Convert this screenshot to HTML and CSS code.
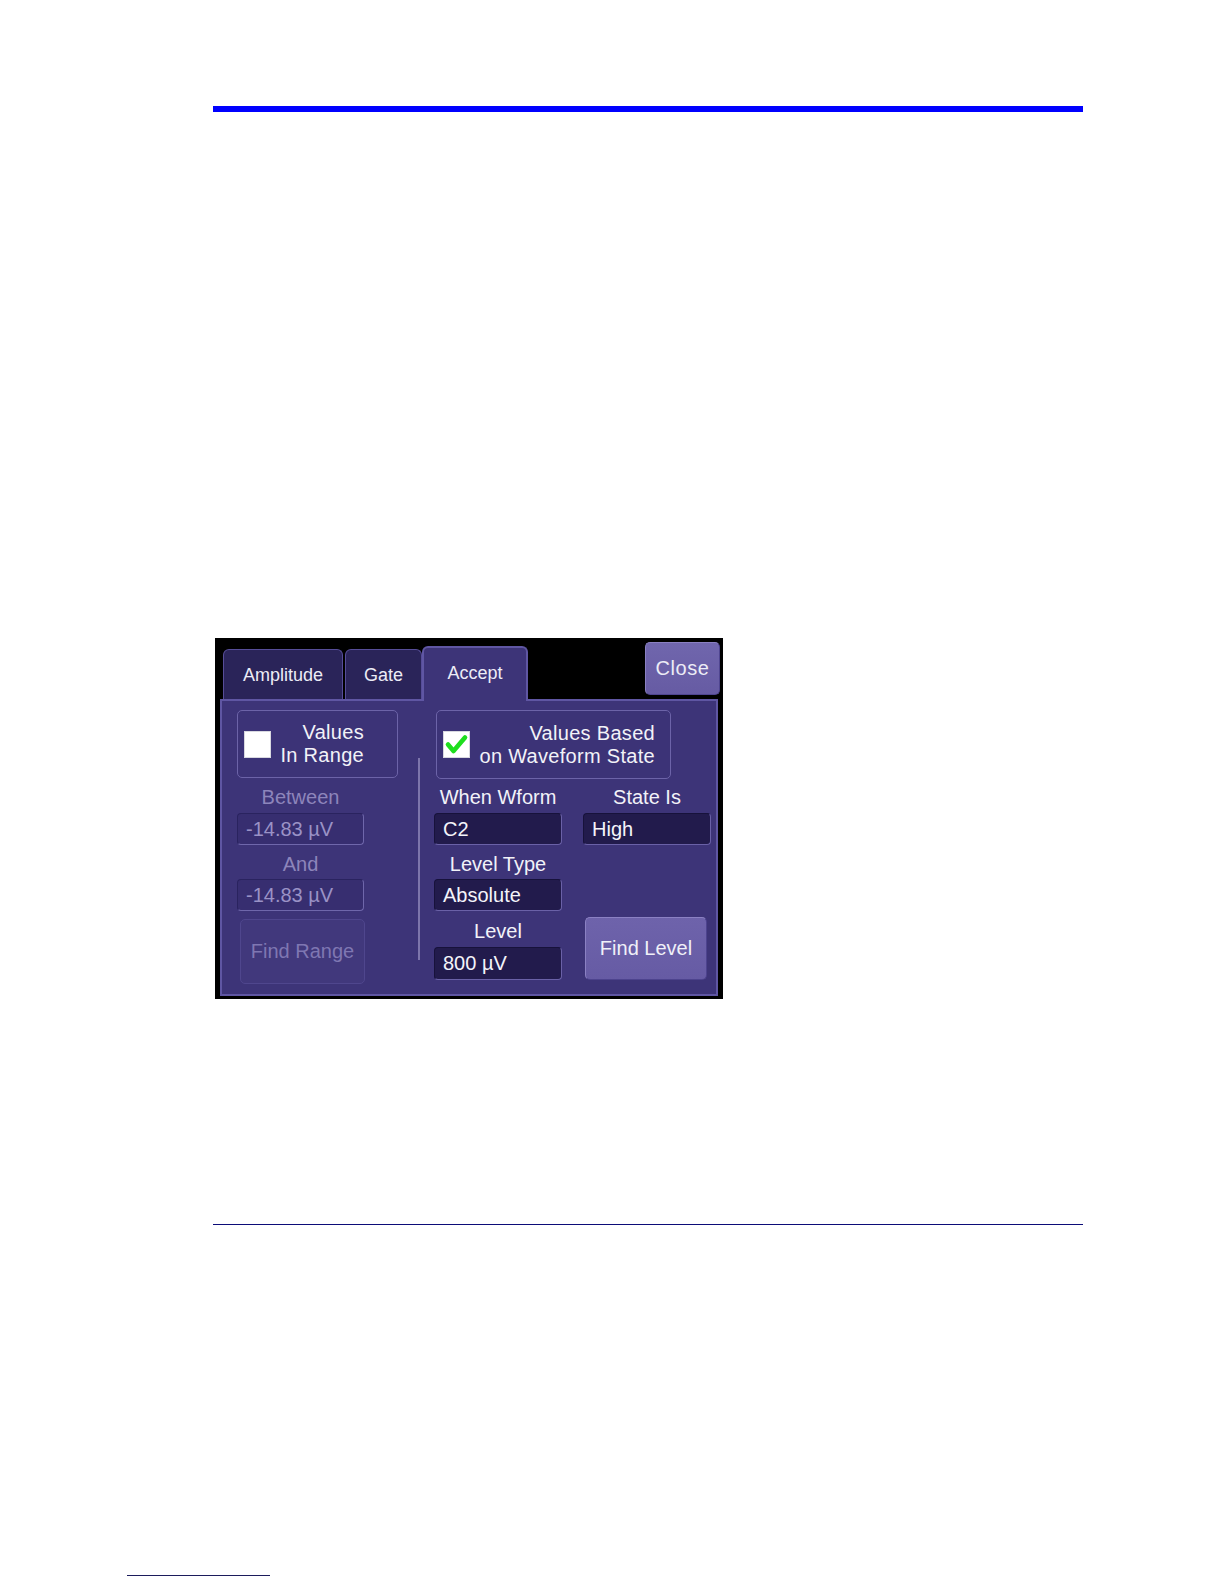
FILE: index.html
```html
<!DOCTYPE html>
<html lang="en">
<head>
<meta charset="utf-8">
<title>Accept</title>
<link rel="stylesheet" href="styles.css">
</head>
<body>
<div class="page">
  <div class="rule-top"></div>

  <div class="dialog">
    <div class="dialog-head">
      <div class="tab">Amplitude</div>
      <div class="tab tab-gate">Gate</div>
      <div class="tab tab-active">Accept</div>
      <div class="close-btn">Close</div>
    </div>

    <div class="panel">
      <div class="col-left">
        <div class="opt-btn opt-range">
          <span class="checkbox"></span>
          <span class="opt-text">Values<br>In Range</span>
        </div>
        <div class="label label-first disabled">Between</div>
        <div class="field field-disabled">-14.83 µV</div>
        <div class="label label-mid disabled">And</div>
        <div class="field field-disabled field-second">-14.83 µV</div>
        <div class="btn-find-range">Find Range</div>
      </div>

      <div class="divider"></div>

      <div class="col-right">
        <div class="opt-btn opt-state">
          <span class="checkbox">
            <svg viewBox="0 0 27 27" width="27" height="27">
              <path d="M5 13.5 L10.5 20 L22 6.5" fill="none" stroke="#1ede1e" stroke-width="4.6" stroke-linecap="round" stroke-linejoin="round"/>
            </svg>
          </span>
          <span class="opt-text">Values Based<br>on Waveform State</span>
        </div>
        <div class="grid">
          <div class="label label-first">When Wform</div>
          <div class="label label-first">State Is</div>
          <div class="field field-row1">C2</div>
          <div class="field field-row1">High</div>
          <div class="label label-mid">Level Type</div>
          <div class="field field-row2">Absolute</div>
          <div class="label label-last">Level</div>
          <div class="field field-row3">800 µV</div>
          <div class="btn-find-level">Find Level</div>
        </div>
      </div>
    </div>
  </div>

  <div class="rule-bottom"></div>
  <div class="rule-foot"></div>
</div>
</body>
</html>
```

FILE: styles.css
```css
html, body {
  margin: 0;
  padding: 0;
  background: #ffffff;
}

body {
  font-family: "Liberation Sans", Arial, sans-serif;
}

.page {
  box-sizing: border-box;
  height: 1584px;
  padding: 106px 0 0 213px;
  overflow: hidden;
}

.rule-top {
  width: 870px;
  height: 6px;
  background: #0000ff;
}

.rule-bottom {
  width: 870px;
  height: 1px;
  margin-top: 225px;
  background: #0c0c78;
}

.rule-foot {
  width: 143px;
  height: 1px;
  margin: 350px 0 0 -86px;
  background: #1c1c5c;
}

/* ---------- dialog ---------- */

.dialog {
  box-sizing: border-box;
  width: 508px;
  height: 361px;
  margin: 526px 0 0 2px;
  padding: 0 5px 3px 5px;
  background: #000000;
  display: flex;
  flex-direction: column;
  color: #f2f2f8;
  font-size: 20px;
}

.dialog-head {
  height: 61px;
  display: flex;
  align-items: flex-end;
  padding-left: 3px;
}

.tab {
  box-sizing: border-box;
  height: 50px;
  width: 120px;
  background: #2a2459;
  border: 1px solid #564d98;
  border-bottom: none;
  border-radius: 6px 6px 0 0;
  display: flex;
  align-items: center;
  justify-content: center;
  font-size: 18px;
  color: #ececf6;
  padding-top: 1px;
}

.tab-gate {
  width: 77px;
  margin-left: 2px;
}

.tab-active {
  width: 106px;
  height: 55px;
  margin-bottom: -2px;
  padding-bottom: 4px;
  background: #3d3478;
  border: 2px solid #5f56a3;
  border-bottom: none;
  position: relative;
  z-index: 1;
}

.close-btn {
  box-sizing: border-box;
  align-self: flex-start;
  margin: 4px -2px 0 auto;
  width: 75px;
  height: 53px;
  border-radius: 5px;
  background: linear-gradient(#7066ad, #665ba3);
  border: 1px solid #8a80c2;
  border-right-color: #4f4590;
  border-bottom-color: #4f4590;
  display: flex;
  align-items: center;
  justify-content: center;
  font-size: 20px;
  letter-spacing: 0.6px;
  color: #ececf6;
}

.panel {
  box-sizing: border-box;
  height: 297px;
  border: 2px solid #5f56a3;
  background: #3d3478;
  padding: 9px 0 0 15px;
  display: flex;
  align-items: flex-start;
}

/* option buttons with checkbox */

.opt-btn {
  box-sizing: border-box;
  display: flex;
  align-items: center;
  border: 1px solid #6c63a8;
  border-radius: 5px;
  background: #3c3377;
  padding-left: 6px;
}

.opt-range {
  width: 161px;
  height: 68px;
}

.opt-state {
  width: 235px;
  height: 69px;
  margin-left: 2px;
}

.checkbox {
  box-sizing: border-box;
  width: 27px;
  height: 27px;
  background: #ffffff;
  border: 1px solid #d8d8e0;
  flex: none;
  display: flex;
}

.checkbox svg {
  display: block;
  margin: -1px;
}

.opt-text {
  flex: 1;
  text-align: right;
  line-height: 23px;
  font-size: 20px;
  letter-spacing: 0.3px;
  color: #f2f2f8;
}

.opt-range .opt-text {
  padding-right: 33px;
}

.opt-state .opt-text {
  padding-right: 15px;
}

/* labels and fields */

.label {
  height: 22px;
  line-height: 22px;
  text-align: center;
  font-size: 20px;
  white-space: nowrap;
}

.col-left .label {
  width: 127px;
}

.label.disabled {
  color: #8d85bb;
}

.label-first {
  margin-top: 7px;
}

.col-left .label-first {
  margin-top: 8px;
}

.label-mid {
  margin-top: 8px;
}

.label-last {
  margin-top: 9px;
}

.field {
  box-sizing: border-box;
  height: 32px;
  line-height: 30px;
  padding-left: 8px;
  border-radius: 4px;
  background: #221b4c;
  border: 1px solid #6a61a7;
  border-top-color: #17123b;
  border-left-color: #17123b;
  font-size: 20px;
  color: #f4f4fa;
  white-space: nowrap;
  margin-top: 5px;
}

.field-disabled {
  width: 127px;
  background: #372e70;
  border-color: #2a235f #6f67ab #6f67ab #2a235f;
  color: #9a92c6;
}

.field-second {
  margin-top: 4px;
}

.field-row2 {
  margin-top: 4px;
}

.field-row3 {
  height: 33px;
  line-height: 31px;
}

.btn-find-range {
  box-sizing: border-box;
  width: 125px;
  height: 65px;
  margin: 8px 0 0 3px;
  border: 1px solid #4f468d;
  border-radius: 5px;
  background: #41387c;
  display: flex;
  align-items: center;
  justify-content: center;
  font-size: 20px;
  color: #7f77b2;
}

.divider {
  flex: none;
  width: 2px;
  height: 202px;
  margin: 48px 0 0 20px;
  background: #7d75ab;
}

.col-right {
  margin-left: 14px;
}

.grid {
  display: grid;
  grid-template-columns: 128px 128px;
  column-gap: 21px;
  align-items: start;
}

.grid .label-mid,
.grid .field-row2,
.grid .label-last,
.grid .field-row3 {
  grid-column: 1;
}

.btn-find-level {
  grid-column: 2;
  grid-row: 5 / span 2;
  align-self: end;
  box-sizing: border-box;
  width: 122px;
  height: 63px;
  margin-left: 2px;
  border-radius: 5px;
  background: linear-gradient(#6e63ab, #665ba4);
  border: 1px solid #8b81c3;
  border-right-color: #4d438e;
  border-bottom-color: #4d438e;
  display: flex;
  align-items: center;
  justify-content: center;
  font-size: 20px;
  color: #f0f0f8;
}
```
